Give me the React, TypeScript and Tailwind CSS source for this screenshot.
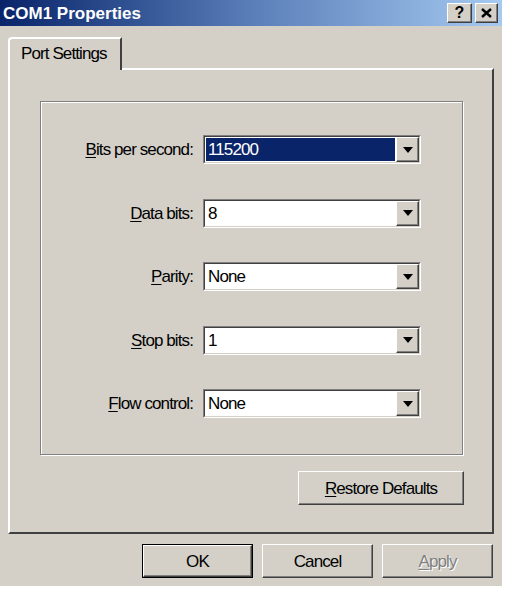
const raised =
  'border border-t-white border-l-white border-r-[#404040] border-b-[#404040] shadow-[inset_-1px_-1px_0_#808080]';

function Key({ children }: { children: string }) {
  return <span className="underline underline-offset-[2px] decoration-[1px]">{children}</span>;
}

function Arrow() {
  return (
    <svg width="10" height="6" viewBox="0 0 10 6">
      <polygon points="0,0 10,0 5,6" fill="#000" />
    </svg>
  );
}

function Combo({ value, selected }: { value: string; selected?: boolean }) {
  return (
    <div className="w-[218px] h-[29px] border border-t-[#808080] border-l-[#808080] border-r-white border-b-white">
      <div className="h-full flex border border-t-[#404040] border-l-[#404040] border-r-[#d4d0c8] border-b-[#d4d0c8] bg-white">
        <div className="flex-1 p-[1px]">
          <div
            className={
              selected
                ? 'h-full flex items-center pl-[2px] bg-[#0a246a] text-white'
                : 'h-full flex items-center pl-[2px] text-black'
            }
          >
            {value}
          </div>
        </div>
        <div className={`w-[23px] h-full bg-[#d4d0c8] flex items-center justify-center ${raised}`}>
          <Arrow />
        </div>
      </div>
    </div>
  );
}

export default function App() {
  const rows = [
    { key: 'B', rest: 'its per second:', value: '115200', selected: true },
    { key: 'D', rest: 'ata bits:', value: '8' },
    { key: 'P', rest: 'arity:', value: 'None' },
    { key: 'S', rest: 'top bits:', value: '1' },
    { key: 'F', rest: 'low control:', value: 'None' },
  ];

  return (
    <div className="min-h-screen bg-white font-['Liberation_Sans',Arial,sans-serif] text-[17px] tracking-[-0.9px] leading-none text-black">
      <div className="w-[502px] h-[586px] bg-[#d4d0c8] flex flex-col">
        {/* title bar */}
        <div className="h-[26px] flex items-center justify-between pl-[3px] pr-[4px] bg-linear-to-r from-[#0a246a] via-[#5a7eb8] to-[#a6caf0]">
          <span className="font-bold text-[17px] tracking-normal text-white">COM1 Properties</span>
          <div className="flex gap-[3px]">
            <div className={`w-[25px] h-[20px] bg-[#d4d0c8] flex items-center justify-center ${raised}`}>
              <span className="font-bold text-[16px] tracking-normal">?</span>
            </div>
            <div className={`w-[23px] h-[20px] bg-[#d4d0c8] flex items-center justify-center ${raised}`}>
              <svg width="11" height="10" viewBox="0 0 11 10">
                <path d="M1 1 L10 9 M10 1 L1 9" stroke="#000" strokeWidth="2.4" />
              </svg>
            </div>
          </div>
        </div>

        <div className="flex flex-col px-[8px] pt-[11px]">
          {/* tab */}
          <div className="relative z-10 -mb-[2px] w-[114px] h-[33px] bg-[#d4d0c8] border-t-2 border-l-2 border-r-2 border-t-white border-l-white border-r-[#404040] rounded-tl-[4px] flex items-center whitespace-nowrap pl-[11px] pb-[2px]">
            Port Settings
          </div>

          {/* panel */}
          <div className="h-[466px] border-2 border-t-white border-l-white border-r-[#404040] border-b-[#404040] pl-[30px] pr-[29px] pt-[31px]">
            <div className="h-[354px] border border-[#808080] shadow-[inset_1px_1px_0_white,1px_1px_0_white] pt-[33px]">
              <div className="grid grid-cols-[152px_218px] gap-x-[10px] gap-y-[34.5px] items-center">
                {rows.map((r) => (
                  <div key={r.key} className="contents">
                    <div className="text-right whitespace-nowrap">
                      <Key>{r.key}</Key>
                      {r.rest}
                    </div>
                    <Combo value={r.value} selected={r.selected} />
                  </div>
                ))}
              </div>
            </div>
            <div className="flex justify-end mt-[16px] -mr-[1px]">
              <div className={`w-[166px] h-[34px] flex items-center justify-center ${raised}`}>
                <span>
                  <Key>R</Key>estore Defaults
                </span>
              </div>
            </div>
          </div>

          {/* bottom buttons */}
          <div className="flex justify-end gap-[9px] mt-[10px] pr-[1px]">
            <div className="w-[111px] h-[34px] border border-black">
              <div className={`h-full flex items-center justify-center ${raised}`}>OK</div>
            </div>
            <div className={`w-[111px] h-[34px] flex items-center justify-center ${raised}`}>Cancel</div>
            <div
              className={`w-[111px] h-[34px] flex items-center justify-center text-[#808080] [text-shadow:1px_1px_0_white] ${raised}`}
            >
              <span>
                <Key>A</Key>pply
              </span>
            </div>
          </div>
        </div>
      </div>
    </div>
  );
}
